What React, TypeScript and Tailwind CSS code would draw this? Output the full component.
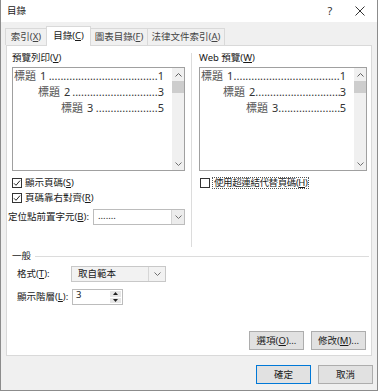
import React from "react";

const Check = ({ checked }: { checked?: boolean }) => (
  <span className="w-[10px] h-[10px] border border-[#333333] bg-white flex items-center justify-center shrink-0">
    {checked && (
      <svg width="8" height="8" viewBox="0 0 8 8">
        <path d="M1 4.3 L3 6.3 L7 1.6" stroke="#222222" strokeWidth="1" fill="none" />
      </svg>
    )}
  </span>
);

const ChevronDown = () => (
  <svg width="7" height="4" viewBox="0 0 7 4">
    <path d="M0.5 0.5 L3.5 3.5 L6.5 0.5" stroke="#707070" strokeWidth="1" fill="none" />
  </svg>
);

const ChevronUp = () => (
  <svg width="7" height="4" viewBox="0 0 7 4">
    <path d="M0.5 3.5 L3.5 0.5 L6.5 3.5" stroke="#606060" strokeWidth="1" fill="none" />
  </svg>
);

type Entry = { level: string; page: string; dots: number; indent: string };

const TocLine = ({ e }: { e: Entry }) => (
  <div className={`flex items-center h-[16px] ${e.indent}`}>
    <span className="text-[#555555] whitespace-nowrap">標題</span>
    <span className="ml-[4px] text-[#333333]">{e.level}</span>
    <span className="flex-1 min-w-0 text-right whitespace-nowrap overflow-hidden text-[#333333]">
      {".".repeat(e.dots)}
    </span>
    <span className="text-[#333333]">{e.page}</span>
  </div>
);

const PreviewBox = ({ entries, width }: { entries: Entry[]; width: string }) => (
  <div className={`mt-[3px] h-[104px] ${width} border border-[#a0a0a0] bg-white flex`}>
    <div className="flex-1 min-w-0 pr-[8px] text-[11px] leading-[16px]">
      {entries.map((e) => (
        <TocLine key={e.level} e={e} />
      ))}
    </div>
    <div className="w-[12px] bg-[#f0f0f0] flex flex-col items-center">
      <div className="h-[13px] flex items-center justify-center">
        <ChevronUp />
      </div>
      <div className="w-[12px] h-[12px] bg-[#cdcdcd]" />
      <div className="flex-1" />
      <div className="h-[13px] flex items-center justify-center">
        <ChevronDown />
      </div>
    </div>
  </div>
);

const Button = ({ children, primary }: { children: React.ReactNode; primary?: boolean }) => (
  <div
    className={`w-[55px] h-[19px] flex items-center justify-center bg-[#e1e1e1] border ${
      primary ? "border-[#0078d7]" : "border-[#adadad]"
    }`}
  >
    {children}
  </div>
);

const leftEntries: Entry[] = [
  { level: "1", page: "1", dots: 37, indent: "pl-[1px]" },
  { level: "2", page: "3", dots: 29, indent: "pl-[25px]" },
  { level: "3", page: "5", dots: 21, indent: "pl-[48px]" },
];

const rightEntries: Entry[] = [
  { level: "1", page: "1", dots: 36, indent: "pl-[1px]" },
  { level: "2", page: "3", dots: 29, indent: "pl-[23px]" },
  { level: "3", page: "5", dots: 21, indent: "pl-[46px]" },
];

export default function App() {
  return (
    <div className="w-[378px] h-[391px] bg-[#f0f0f0] border-x border-b border-[#8c8c8c] flex flex-col font-['Noto_Sans','Noto_Sans_CJK_TC',sans-serif] text-[9.5px] leading-[12px] text-[#1a1a1a]">
      {/* Title bar */}
      <div className="h-[22px] bg-white flex items-center pl-[6px] shrink-0">
        <span>目錄</span>
        <span className="ml-auto w-[30px] text-center text-[11px] text-[#333333]">?</span>
        <span className="w-[30px] mr-[2px] flex items-center justify-center">
          <svg width="10" height="10" viewBox="0 0 10 10">
            <path d="M0.5 0.5 L9.5 9.5 M9.5 0.5 L0.5 9.5" stroke="#333333" strokeWidth="1" />
          </svg>
        </span>
      </div>

      {/* Tabs */}
      <div className="mt-[4px] ml-[4px] h-[20px] -mb-px flex items-end relative z-10">
        <div className="w-[42px] h-[17px] mb-px border border-b-0 border-[#d9d9d9] flex items-center justify-center text-[#444444]">
          索引(<u>X</u>)
        </div>
        <div className="w-[45px] h-[20px] -ml-px border border-b-0 border-[#d9d9d9] bg-white flex items-center justify-center pb-[2px]">
          目錄(<u>C</u>)
        </div>
        <div className="w-[58px] h-[17px] mb-px -ml-px border border-b-0 border-[#d9d9d9] flex items-center justify-center text-[#444444]">
          圖表目錄(<u>F</u>)
        </div>
        <div className="w-[78px] h-[17px] mb-px -ml-px border border-b-0 border-[#d9d9d9] flex items-center justify-center text-[#444444]">
          法律文件索引(<u>A</u>)
        </div>
      </div>

      {/* Panel */}
      <div className="ml-[5px] w-[366px] h-[311px] bg-white border border-[#d9d9d9] flex flex-col shrink-0">
        <div className="flex h-[201px] shrink-0">
          {/* Left pane */}
          <div className="ml-[5px] w-[173px] flex flex-col">
            <div className="mt-[6px] h-[12px]">
              預覽列印(<u>V</u>)
            </div>
            <PreviewBox entries={leftEntries} width="w-[173px]" />
            <div className="mt-[7px] h-[10px] flex items-center gap-[3px]">
              <Check checked />
              <span>
                顯示頁碼(<u>S</u>)
              </span>
            </div>
            <div className="mt-[5px] h-[10px] flex items-center gap-[3px]">
              <Check checked />
              <span>
                頁碼靠右對齊(<u>R</u>)
              </span>
            </div>
            <div className="mt-[6px] -ml-[4px] h-[16px] flex items-center">
              <span className="w-[85px]">
                定位點前置字元(<u>B</u>):
              </span>
              <div className="w-[92px] h-[16px] border border-[#bcbcbc] bg-white flex items-center">
                <span className="flex-1 pl-[4px] -mt-[3px]">.......</span>
                <div className="w-[13px] h-full bg-[#ececec] border-l border-[#d4d4d4] flex items-center justify-center">
                  <ChevronDown />
                </div>
              </div>
            </div>
          </div>

          {/* Separator */}
          <div className="ml-[6px] mt-[7px] w-px h-[194px] bg-[#dcdcdc]" />

          {/* Right pane */}
          <div className="ml-[7px] w-[168px] flex flex-col">
            <div className="mt-[6px] h-[12px]">
              Web 預覽(<u>W</u>)
            </div>
            <PreviewBox entries={rightEntries} width="w-[168px]" />
            <div className="mt-[6px] h-[12px] flex items-center gap-[2px]">
              <span className="ml-px">
                <Check />
              </span>
              <span className="border border-dotted border-[#555555] px-[1px] h-[12px] flex items-center tracking-[-0.4px]">
                使用超連結代替頁碼(<u>H</u>)
              </span>
            </div>
          </div>
        </div>

        {/* General group */}
        <div className="mt-[3px] h-[12px] flex items-center">
          <span className="ml-[5px]">一般</span>
          <div className="flex-1 h-px bg-[#dcdcdc] ml-[4px] mr-[2px]" />
        </div>
        <div className="mt-[4px] h-[16px] flex items-center">
          <span className="ml-[10px] w-[54px]">
            格式(<u>T</u>):
          </span>
          <div className="w-[95px] h-[16px] border border-[#c8c8c8] bg-[#f2f2f2] flex items-center">
            <span className="flex-1 pl-[6px]">取自範本</span>
            <div className="w-[17px] h-full border-l border-[#d6d6d6] flex items-center justify-center">
              <ChevronDown />
            </div>
          </div>
        </div>
        <div className="mt-[7px] h-[16px] flex items-center">
          <span className="ml-[10px] w-[55px]">
            顯示階層(<u>L</u>):
          </span>
          <div className="w-[51px] h-[16px] border border-[#bcbcbc] bg-white flex">
            <span className="flex-1 pl-[3px] -mt-[1px]">3</span>
            <div className="w-[11px] mr-px flex flex-col py-px">
              <div className="flex-1 bg-[#e6e6e6] border-b border-white flex items-center justify-center">
                <svg width="5" height="3" viewBox="0 0 5 3">
                  <path d="M0 3 L2.5 0 L5 3 Z" fill="#222222" />
                </svg>
              </div>
              <div className="flex-1 bg-[#e6e6e6] flex items-center justify-center">
                <svg width="5" height="3" viewBox="0 0 5 3">
                  <path d="M0 0 L2.5 3 L5 0 Z" fill="#222222" />
                </svg>
              </div>
            </div>
          </div>
        </div>

        <div className="mt-[26px] flex justify-end gap-[7px] pr-[5px]">
          <Button>
            選項(<u>O</u>)...
          </Button>
          <Button>
            修改(<u>M</u>)...
          </Button>
        </div>
      </div>

      {/* Bottom buttons */}
      <div className="mt-[9px] flex justify-end gap-[7px] pr-[4px]">
        <Button primary>確定</Button>
        <Button>取消</Button>
      </div>
    </div>
  );
}
